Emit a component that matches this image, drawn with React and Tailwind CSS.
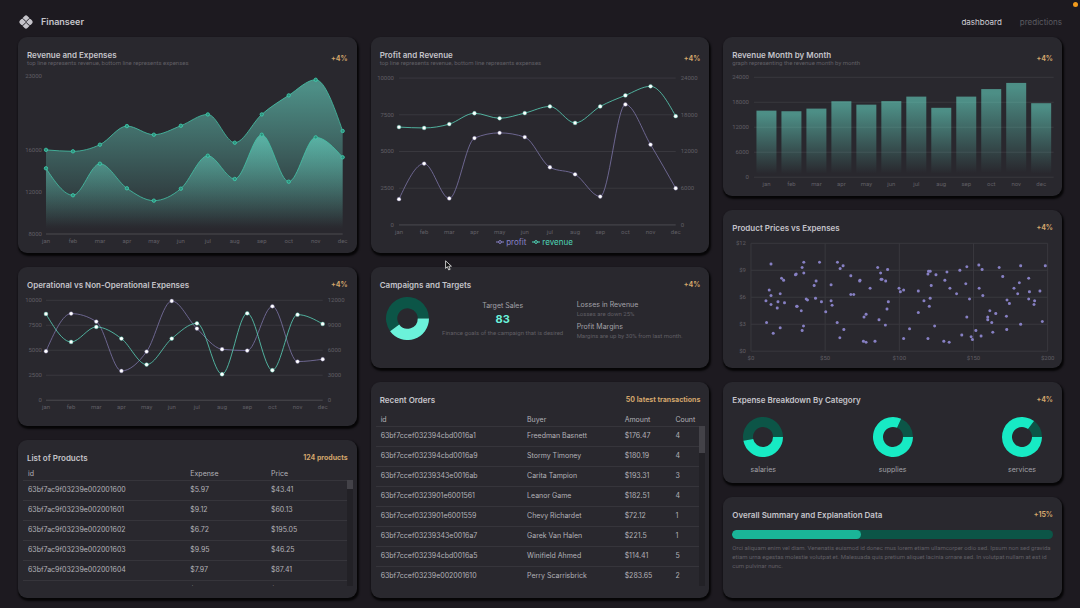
import { MdPix } from "react-icons/md";

const MONTHS = ["jan", "feb", "mar", "apr", "may", "jun", "jul", "aug", "sep", "oct", "nov", "dec"];
const REVENUE = [15990, 15850, 16480, 18250, 17430, 18280, 19360, 16670, 19360, 21170, 22650, 17780];
const EXPENSES = [14237, 11674, 14674, 12339, 11161, 12301, 15434, 13222, 17427, 12965, 17180, 15282];
const PROFIT = REVENUE.map((r, i) => r - EXPENSES[i]);
const OPERATIONAL = [4900, 8670, 7870, 2930, 4870, 9930, 7170, 5100, 4970, 9400, 3870, 4100];
const NON_OPERATIONAL = [10360, 7000, 8800, 7400, 4280, 7400, 9240, 3120, 10440, 3600, 10280, 9160];

// [price, expense]
const PRODUCT_POINTS = [
  [13.5, 9.7], [35.6, 9.9], [34.5, 9.3], [35.6, 8.7], [30.5, 8.6], [30, 8.5], [46.2, 9.9], [58.3, 9.9],
  [62.1, 9.5], [60.1, 9.2], [67.3, 8.4], [73.5, 7.9], [73.3, 7.8], [20.6, 8.1], [22, 7.9], [43.9, 7.8],
  [42.6, 7.3], [54, 7.4], [12.3, 6.8], [19.7, 6.4], [13.5, 6.2], [10.1, 5.6], [18.2, 5.5], [22.6, 5.4],
  [13.5, 5.2], [17.7, 4.8], [37.2, 5.8], [38.1, 5.7], [43.5, 5.9], [47.5, 5.5], [31.1, 5], [30.8, 5],
  [33.9, 4.5], [50.4, 4.4], [54, 5.6], [54.7, 5.1], [67.3, 6.3], [69.3, 6.3], [80.3, 7], [85.4, 9.3],
  [92.1, 9.1], [87.4, 8.7], [88.3, 8], [87.7, 8], [90.8, 7.8], [99.8, 7], [100.7, 6.6], [102.9, 6.8],
  [92.6, 5.5], [91.7, 4.7], [86.3, 3.5], [90.6, 2.9], [76.2, 3.8], [77.6, 4.1], [10.5, 3.2], [19.7, 2.6],
  [15, 2], [35.4, 2.8], [34.5, 2.3], [58.1, 3.2], [62.6, 2.4], [59.9, 1.5], [75.8, 1.1], [77.6, 1],
  [83.6, 1.1], [106.9, 2.5], [102.9, 1.4], [112.8, 6.7], [116.6, 5.6], [112.8, 4.3], [119.3, 8.6],
  [119.7, 8.9], [120.8, 8.9], [124.7, 8.5], [121.5, 7.3], [120.8, 5.9], [120.2, 5], [123.8, 2.8],
  [119.3, 1.4], [130, 1.1], [133.6, 1], [132.1, 8.8], [130.7, 7.9], [134.1, 7], [138.6, 6.4], [140.8, 9],
  [145.5, 9.4], [144.8, 7.5], [147.3, 5.8], [145.5, 3.8], [142.1, 1.8], [148.4, 1.6], [149.3, 1.3],
  [151.6, 2.3], [155.1, 1.7], [153.6, 9.6], [155.8, 9.1], [153.8, 7], [156.3, 6.2], [161, 4.5], [165, 4.2],
  [159.6, 3.8], [159.6, 3.5], [162.3, 3.2], [163, 2.1], [167.3, 9.3], [169.7, 8.3], [172.6, 5.7],
  [174.2, 5.3], [172.2, 3.9], [172.4, 2.4], [177.3, 7], [179.8, 6.4], [180.9, 7.6], [181.8, 9.5],
  [181.8, 3], [187.2, 8.1], [187.7, 6.6], [187.2, 5.8], [191.2, 5.6], [190.8, 5.2], [194.8, 6.7],
  [198.4, 9.5], [196.4, 3.3],
];

const PRODUCTS = [
  ["63bf7ac9f03239e002001600", "$5.97", "$43.41"],
  ["63bf7ac9f03239e002001601", "$9.12", "$60.13"],
  ["63bf7ac9f03239e002001602", "$6.72", "$195.05"],
  ["63bf7ac9f03239e002001603", "$9.95", "$46.25"],
  ["63bf7ac9f03239e002001604", "$7.97", "$87.41"],
  ["63bf7ac9f03239e002001605", "$7.87", "$79.66"],
];

const ORDERS = [
  ["63bf7ccef032394cbd0016a1", "Freedman Basnett", "$176.47", "4"],
  ["63bf7ccef032394cbd0016a9", "Stormy Timoney", "$180.19", "4"],
  ["63bf7ccef03239343e0016ab", "Carita Tampion", "$193.31", "3"],
  ["63bf7ccef0323901e6001561", "Leanor Game", "$182.51", "4"],
  ["63bf7ccef0323901e6001559", "Chevy Richardet", "$72.12", "1"],
  ["63bf7ccef03239343e0016a7", "Garek Van Halen", "$221.5", "1"],
  ["63bf7ccef032394cbd0016a5", "Winifield Ahmed", "$114.41", "5"],
  ["63bf7ccef03239e002001610", "Perry Scarrisbrick", "$283.65", "2"],
];

const TEAL = "#5bd3ba";
const PURPLE = "#7d76a8";

const scale = (d0, d1, r0, r1) => (v) => r0 + ((v - d0) / (d1 - d0)) * (r1 - r0);

const toPoints = (data, x0, x1, y) =>
  data.map((v, i) => [x0 + (i * (x1 - x0)) / (data.length - 1), y(v)]);

// Monotone cubic interpolation through the points
function curve(pts) {
  const n = pts.length;
  const slope = (a, b) => (b[1] - a[1]) / (b[0] - a[0]);
  const t = new Array(n);
  for (let i = 1; i < n - 1; i++) {
    const s0 = slope(pts[i - 1], pts[i]);
    const s1 = slope(pts[i], pts[i + 1]);
    const p = (s0 + s1) / 2;
    t[i] = (Math.sign(s0) + Math.sign(s1)) * Math.min(Math.abs(s0), Math.abs(s1), 0.5 * Math.abs(p)) || 0;
  }
  t[0] = (3 * slope(pts[0], pts[1]) - t[1]) / 2;
  t[n - 1] = (3 * slope(pts[n - 2], pts[n - 1]) - t[n - 2]) / 2;
  let d = `M${pts[0][0]},${pts[0][1]}`;
  for (let i = 0; i < n - 1; i++) {
    const [ax, ay] = pts[i];
    const [bx, by] = pts[i + 1];
    const dx = (bx - ax) / 3;
    d += `C${ax + dx},${ay + dx * t[i]},${bx - dx},${by - dx * t[i + 1]},${bx},${by}`;
  }
  return d;
}

function Card({ className = "", children }) {
  return (
    <section
      className={`flex min-h-0 min-w-0 flex-col overflow-hidden rounded-[9px] bg-[#29282e] shadow-[1px_2px_2px_1px_rgba(0,0,0,0.8)] ${className}`}
    >
      {children}
    </section>
  );
}

function SmallText({ className = "", children }) {
  return <p className={`font-['Roboto',sans-serif] text-[6px] text-[#605f65] ${className}`}>{children}</p>;
}

function CardHeader({ title, subtitle, side }) {
  return (
    <div className="flex items-center justify-between px-[9px] pt-[14px]">
      <div>
        <h2 className="text-[8px] leading-[8px] font-semibold text-[#c5c4ca]">{title}</h2>
        {subtitle && <SmallText className="leading-[8px]">{subtitle}</SmallText>}
      </div>
      <span className="text-[7px] leading-[8px] font-bold text-[#d3a66c]">{side}</span>
    </div>
  );
}

function Chart({ height, label, children }) {
  return (
    <svg
      viewBox={`0 0 339 ${height}`}
      role="img"
      aria-label={label}
      className="min-h-0 w-full flex-1 fill-[#605f65] font-['Roboto',sans-serif] text-[6px]"
    >
      {children}
    </svg>
  );
}

function YLabels({ ticks, x, y, anchor = "end", format = (v) => v }) {
  return ticks.map((v) => (
    <text key={v} x={x} y={y(v) + 2} textAnchor={anchor}>{format(v)}</text>
  ));
}

function MonthLabels({ xs, y }) {
  return MONTHS.map((m, i) => (
    <text key={m} x={xs[i]} y={y} textAnchor="middle">{m}</text>
  ));
}

function GridLines({ ys, x0, x1 }) {
  return ys.map((y, i) => (
    <line key={i} x1={x0} x2={x1} y1={y} y2={y} stroke="#39383e" />
  ));
}

function Series({ pts, color }) {
  return (
    <>
      <path d={curve(pts)} fill="none" stroke={color} strokeWidth="0.8" />
      {pts.map(([x, y]) => (
        <circle key={x} cx={x} cy={y} r="1.9" fill="#fff" stroke={color} strokeWidth="0.4" />
      ))}
    </>
  );
}

function FadeGradient({ id }) {
  return (
    <linearGradient id={id} x1="0" y1="0" x2="0" y2="1">
      <stop offset="5%" stopColor="#71f5de" stopOpacity="0.5" />
      <stop offset="95%" stopColor="#71f5de" stopOpacity="0" />
    </linearGradient>
  );
}

function RevenueExpensesChart() {
  const y = scale(8000, 23000, 167, 9);
  const rev = toPoints(REVENUE, 28, 325, y);
  const exp = toPoints(EXPENSES, 28, 325, y);
  return (
    <Chart height={186} label="Revenue and expenses">
      <defs><FadeGradient id="area" /></defs>
      <YLabels ticks={[8000, 12000, 16000, 23000]} x={24} y={y} />
      <MonthLabels xs={rev.map((p) => p[0])} y={176} />
      <line x1="28" x2="325" y1="167" y2="167" stroke="#403f45" strokeWidth="1.5" />
      {[rev, exp].map((pts, i) => (
        <g key={i}>
          <path d={`${curve(pts)}L325,167L28,167Z`} fill="url(#area)" />
          <path d={curve(pts)} fill="none" stroke="#45c4a8" strokeWidth="0.8" />
          {pts.map(([x, cy]) => (
            <circle key={x} cx={x} cy={cy} r="1.7" fill="#2f8f7c" stroke="#3fd0b0" strokeWidth="0.8" />
          ))}
        </g>
      ))}
    </Chart>
  );
}

function ProfitRevenueChart() {
  const left = scale(0, 10000, 158, 11);
  const right = scale(0, 24000, 158, 11);
  const profit = toPoints(PROFIT, 28, 305, left);
  const revenue = toPoints(REVENUE, 28, 305, right);
  return (
    <Chart height={170} label="Profit and revenue">
      <GridLines ys={[2500, 5000, 7500, 10000].map(left)} x0={28} x1={305} />
      <line x1="28" x2="305" y1="158" y2="158" stroke="#4b4a50" />
      <YLabels ticks={[0, 2500, 5000, 7500, 10000]} x={23} y={left} />
      <YLabels ticks={[0, 6000, 12000, 18000, 24000]} x={310} y={right} anchor="start" />
      <MonthLabels xs={profit.map((p) => p[0])} y={167} />
      <Series pts={profit} color={PURPLE} />
      <Series pts={revenue} color={TEAL} />
    </Chart>
  );
}

function OperationalChart() {
  const left = scale(0, 10000, 111, 11);
  const right = scale(0, 12000, 111, 11);
  const op = toPoints(OPERATIONAL, 28, 305, left);
  const nonOp = toPoints(NON_OPERATIONAL, 28, 305, right);
  return (
    <Chart height={136} label="Operational vs non-operational expenses">
      <GridLines ys={[2500, 5000, 7500, 10000].map(left)} x0={28} x1={305} />
      <line x1="28" x2="305" y1="111" y2="111" stroke="#4b4a50" />
      <YLabels ticks={[0, 2500, 5000, 7500, 10000]} x={24} y={left} />
      <YLabels ticks={[0, 3000, 6000, 9000, 12000]} x={310} y={right} anchor="start" />
      <MonthLabels xs={op.map((p) => p[0])} y={120} />
      <Series pts={op} color={PURPLE} />
      <Series pts={nonOp} color={TEAL} />
    </Chart>
  );
}

function RevenueBars() {
  const y = scale(0, 24000, 110, 10);
  return (
    <Chart height={128} label="Revenue month by month">
      <defs><FadeGradient id="bar" /></defs>
      <GridLines ys={[0, 6000, 12000, 18000, 24000].map(y)} x0={31} x1={331} />
      <YLabels ticks={[0, 6000, 12000, 18000, 24000]} x={26} y={y} />
      <MonthLabels xs={MONTHS.map((_, i) => 43.5 + i * 25)} y={119} />
      {REVENUE.map((v, i) => (
        <rect key={i} x={33.5 + i * 25} y={y(v)} width="20" height={110 - y(v)} fill="url(#bar)" />
      ))}
    </Chart>
  );
}

function PriceScatter() {
  const x = scale(0, 200, 28, 325);
  const y = scale(0, 12, 119, 11);
  return (
    <Chart height={136} label="Product prices vs expenses">
      <GridLines ys={[0, 3, 6, 9, 12].map(y)} x0={28} x1={325} />
      {[0, 50, 100, 150, 200].map((v) => (
        <g key={v}>
          <line x1={x(v)} x2={x(v)} y1="11" y2="119" stroke="#39383e" />
          <text x={x(v)} y="128" textAnchor="middle">${v}</text>
        </g>
      ))}
      <YLabels ticks={[0, 3, 6, 9, 12]} x={23} y={y} format={(v) => `$${v}`} />
      {PRODUCT_POINTS.map(([px, py], i) => (
        <circle key={i} cx={x(px)} cy={y(py)} r="1.5" fill="#8780c4" />
      ))}
    </Chart>
  );
}

// Ring that starts at 3 o'clock; the dark slice runs counter-clockwise for `angle` degrees
function Donut({ angle, outer, inner, color, className, label }) {
  const at = (r, deg) => {
    const a = (deg * Math.PI) / 180;
    return `${r * Math.cos(a)},${-r * Math.sin(a)}`;
  };
  const slice = (a, b) => {
    const big = b - a > 180 ? 1 : 0;
    return `M${at(outer, a)}A${outer},${outer},0,${big},0,${at(outer, b)}L${at(inner, b)}A${inner},${inner},0,${big},1,${at(inner, a)}Z`;
  };
  return (
    <svg viewBox={`${-outer} ${-outer} ${outer * 2} ${outer * 2}`} role="img" aria-label={label} className={className}>
      <path d={slice(0, angle)} fill="#0c5547" />
      <path d={slice(angle, 360)} fill={color} />
    </svg>
  );
}

function LegendItem({ color, label }) {
  return (
    <li className="flex items-center gap-[2px]" style={{ color }}>
      <svg viewBox="0 0 8 8" className="size-[8px]" fill="none" stroke="currentColor">
        <path d="M0 4h2.6M5.4 4H8" />
        <circle cx="4" cy="4" r="1.4" />
      </svg>
      {label}
    </li>
  );
}

function DataTable({ columns, rows, cols, headClass, trackClass, thumbClass }) {
  return (
    <div className="flex min-h-0 flex-1 pr-[4px] pl-[5px]">
      <table className="flex min-h-0 flex-1 flex-col text-[7px] text-[#b3b2b8]">
        <thead className="block">
          <tr className={`grid items-center border-b border-[#36353b] pl-[5px] text-left ${cols} ${headClass}`}>
            {columns.map((c) => <th key={c} className="font-normal">{c}</th>)}
          </tr>
        </thead>
        <tbody className="block min-h-0 flex-1 overflow-y-auto [scrollbar-width:none]">
          {rows.map((row) => (
            <tr key={row[0]} className={`grid h-5 items-center border-b border-[#36353b] pl-[5px] ${cols}`}>
              {row.map((cell, i) => <td key={i}>{cell}</td>)}
            </tr>
          ))}
        </tbody>
      </table>
      <div className={`w-[6px] bg-[#222126] ${trackClass}`}>
        <div className={`bg-[#434248] ${thumbClass}`} />
      </div>
    </div>
  );
}

function Campaigns() {
  return (
    <div className="flex pt-[8px] pl-[15px]">
      <Donut angle={216} outer={21} inner={10} color="#6bf2da" className="size-[43px]" label="Campaign progress" />
      <div className="flex-1 pt-[4px] text-center">
        <h3 className="text-[7px] leading-[9px] text-[#a3a2a8]">Target Sales</h3>
        <p className="text-[11px] leading-[18px] font-bold text-[#6bf2da]">83</p>
        <SmallText className="leading-[9px]">Finance goals of the campaign that is desired</SmallText>
      </div>
      <div className="w-[41%] pt-[3px]">
        <h3 className="text-[7px] leading-[9px] text-[#a3a2a8]">Losses in Revenue</h3>
        <SmallText className="leading-[9px]">Losses are down 25%</SmallText>
        <h3 className="mt-[4px] text-[7px] leading-[9px] text-[#a3a2a8]">Profit Margins</h3>
        <SmallText className="leading-[9px]">Margins are up by 30% from last month.</SmallText>
      </div>
    </div>
  );
}

function Cursor() {
  return (
    <svg viewBox="0 0 12 18" className="absolute top-[260px] left-[445px] h-[11px] w-[7px]">
      <path d="M1 1v13l3-3 2.4 5.6 2.4-1L6.5 10.2H11z" fill="#111" stroke="#e8e8e8" strokeWidth="1.4" />
    </svg>
  );
}

export default function App() {
  return (
    <div className="relative flex h-screen min-h-[600px] flex-col bg-[#1d1a20] font-['Inter',sans-serif]">
      <header className="flex h-[37px] items-center justify-between px-[18px] pt-[6px]">
        <div className="flex items-center gap-[7px] text-[#c5c4ca]">
          <MdPix className="size-4" />
          <h1 className="text-[9px] font-semibold">Finanseer</h1>
        </div>
        <nav className="flex gap-[18px] text-[8px]">
          <a href="#dashboard" className="text-[#d0cfd5]">dashboard</a>
          <a href="#predictions" className="text-[#5b5a60]">predictions</a>
        </nav>
      </header>

      <main className="grid min-h-0 flex-1 grid-cols-3 grid-rows-[repeat(10,minmax(0,1fr))] gap-[14px] px-[18px] pb-[10px]">
        <Card className="col-start-1 row-span-4 row-start-1">
          <CardHeader
            title="Revenue and Expenses"
            subtitle="top line represents revenue, bottom line represents expenses"
            side="+4%"
          />
          <RevenueExpensesChart />
        </Card>

        <Card className="col-start-2 row-span-4 row-start-1">
          <CardHeader
            title="Profit and Revenue"
            subtitle="top line represents revenue, bottom line represents expenses"
            side="+4%"
          />
          <ProfitRevenueChart />
          <ul className="flex justify-center gap-[6px] pr-[11px] pb-[6px] text-[8px] leading-[10px]">
            <LegendItem color="#8780c4" label="profit" />
            <LegendItem color="#4fd6b8" label="revenue" />
          </ul>
        </Card>

        <Card className="col-start-3 row-span-3 row-start-1">
          <CardHeader title="Revenue Month by Month" subtitle="graph representing the revenue month by month" side="+4%" />
          <RevenueBars />
        </Card>

        <Card className="col-start-1 row-span-3 row-start-5">
          <CardHeader title="Operational vs Non-Operational Expenses" side="+4%" />
          <OperationalChart />
        </Card>

        <Card className="col-start-2 row-span-2 row-start-5">
          <CardHeader title="Campaigns and Targets" side="+4%" />
          <Campaigns />
        </Card>

        <Card className="col-start-3 row-span-3 row-start-4">
          <CardHeader title="Product Prices vs Expenses" side="+4%" />
          <PriceScatter />
        </Card>

        <Card className="col-start-1 row-span-3 row-start-8 pb-[12px]">
          <CardHeader title="List of Products" side="124 products" />
          <DataTable
            columns={["id", "Expense", "Price"]}
            rows={PRODUCTS}
            cols="grid-cols-[163fr_81fr_76fr]"
            headClass="h-[19px] pt-[7px]"
            trackClass="mt-[18px]"
            thumbClass="h-[9px]"
          />
        </Card>

        <Card className="col-start-2 row-span-4 row-start-7 pb-[12px]">
          <CardHeader title="Recent Orders" side="50 latest transactions" />
          <DataTable
            columns={["id", "Buyer", "Amount", "Count"]}
            rows={ORDERS}
            cols="grid-cols-[147fr_98fr_51fr_24fr]"
            headClass="h-[23px] pt-[11px]"
            trackClass="mt-[22px]"
            thumbClass="h-[27px]"
          />
        </Card>

        <Card className="col-start-3 row-span-2 row-start-7">
          <CardHeader title="Expense Breakdown By Category" side="+4%" />
          <div className="flex justify-between px-[9px] pt-[13px]">
            {[["salaries", 191], ["supplies", 66], ["services", 53]].map(([name, angle]) => (
              <figure key={name} className="flex w-[62px] flex-col items-center">
                <Donut angle={angle} outer={20} inner={10} color="#17eac4" className="size-[40px]" label={name} />
                <figcaption className="mt-[8px] text-[7px] leading-[9px] text-[#a3a2a8]">{name}</figcaption>
              </figure>
            ))}
          </div>
        </Card>

        <Card className="col-start-3 row-span-2 row-start-9">
          <CardHeader title="Overall Summary and Explanation Data" side="+15%" />
          <div className="px-[9px] pt-[11px]">
            <div className="h-[9px] overflow-hidden rounded-full bg-[#0c5547]">
              <div className="h-full w-2/5 rounded-full bg-[#1ab598]" />
            </div>
            <SmallText className="pt-[4px] leading-[9px]">
              Orci aliquam enim vel diam. Venenatis euismod id donec mus lorem etiam ullamcorper odio sed. Ipsum non sed
              gravida etiam urna egestas molestie volutpat et. Malesuada quis pretium aliquet lacinia ornare sed. In
              volutpat nullam at est id cum pulvinar nunc.
            </SmallText>
          </div>
        </Card>
      </main>

      <Cursor />
      <span className="absolute top-[2px] right-[2px] size-[5px] rounded-full bg-[#f29b1d]" />
    </div>
  );
}
